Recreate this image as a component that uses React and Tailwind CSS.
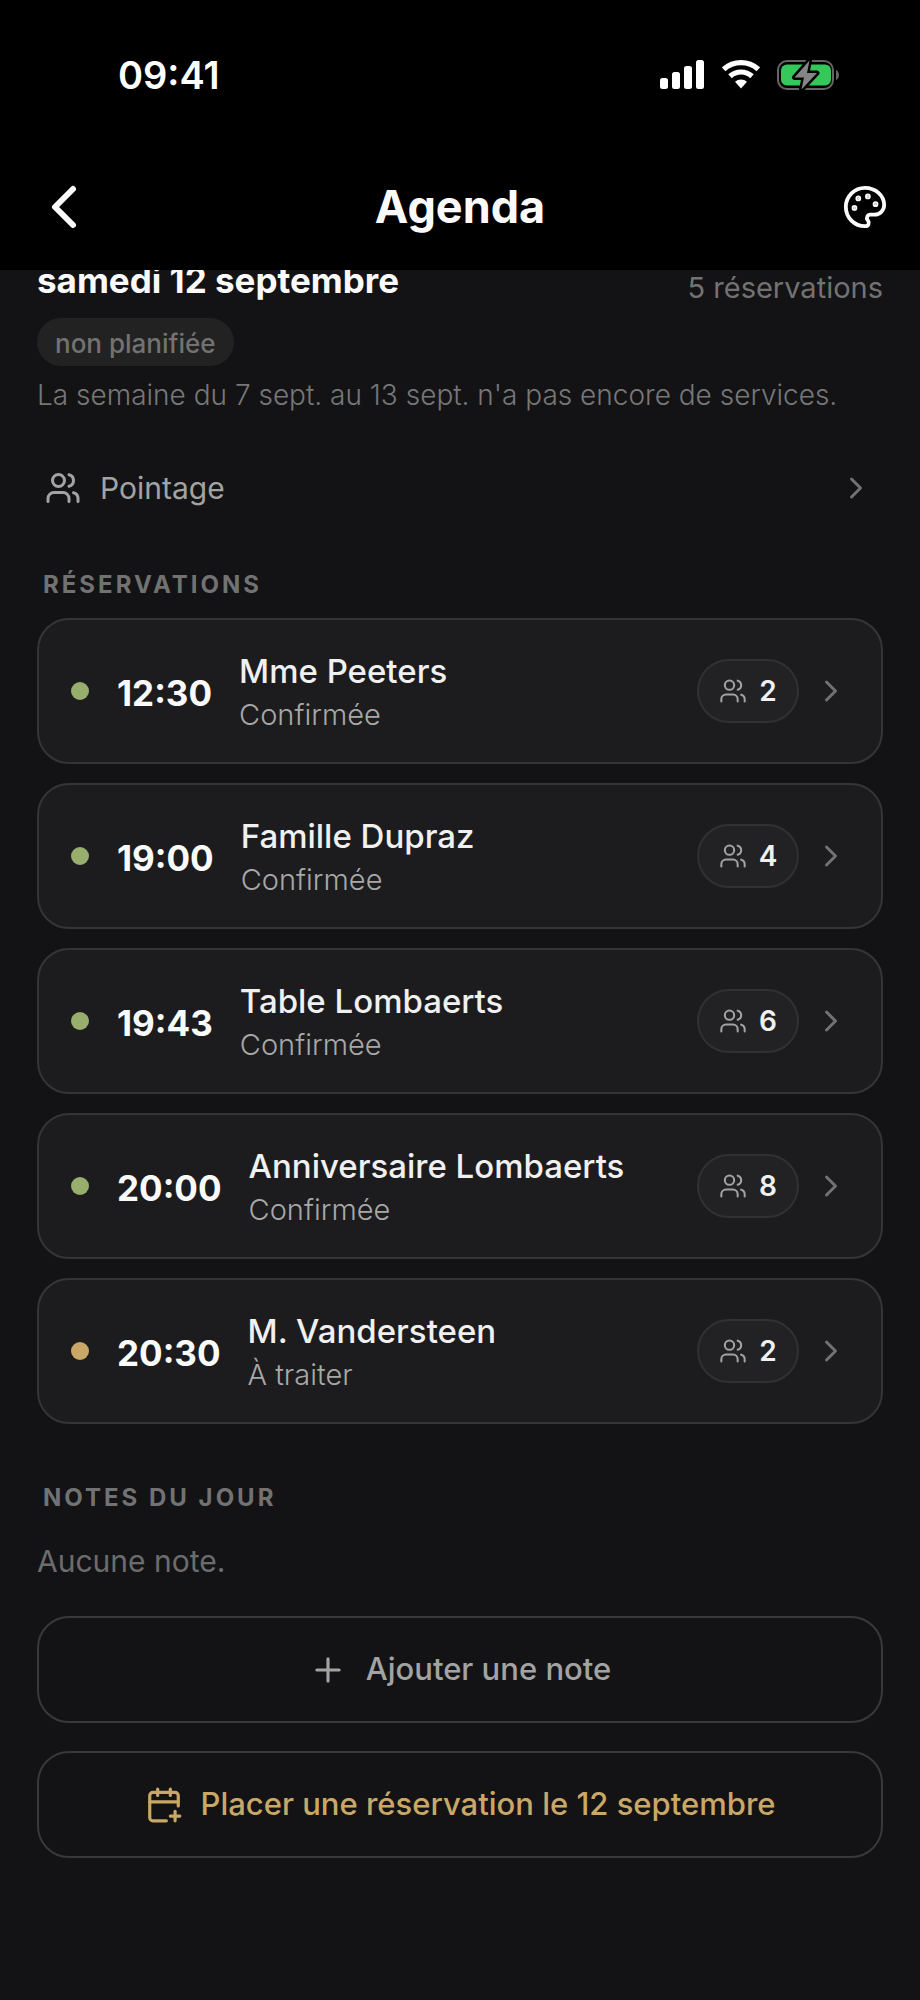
import React from "react";
import { CalendarPlus, ChevronLeft, ChevronRight, Palette, Plus, Users } from "lucide-react";

const reservations = [
  { time: "12:30", name: "Mme Peeters", status: "Confirmée", guests: 2 },
  { time: "19:00", name: "Famille Dupraz", status: "Confirmée", guests: 4 },
  { time: "19:43", name: "Table Lombaerts", status: "Confirmée", guests: 6 },
  { time: "20:00", name: "Anniversaire Lombaerts", status: "Confirmée", guests: 8 },
  { time: "20:30", name: "M. Vandersteen", status: "À traiter", guests: 2 },
];

function StatusBar() {
  return (
    <div className="flex h-[150px] items-center justify-between pr-[80px] pl-[118px] text-white">
      <span className="text-[38px] font-semibold">09:41</span>
      <div className="flex items-center gap-[16px]">
        {/* Signal */}
        <svg className="h-[30px] w-[46px]" viewBox="0 0 46 30" fill="currentColor">
          <rect x="0" y="18" width="8" height="11" rx="2.5" />
          <rect x="12" y="12" width="8" height="17" rx="2.5" />
          <rect x="24" y="6" width="8" height="23" rx="2.5" />
          <rect x="36" y="0" width="8" height="29" rx="2.5" />
        </svg>
        {/* Wifi */}
        <svg className="h-[30px] w-[38px]" viewBox="0 0 38 30" fill="none" stroke="currentColor" strokeWidth="5.2">
          <path d="M1.700 9.300A25.900 25.900 0 0 1 36.300 9.300" />
          <path d="M8 16.200A16.500 16.500 0 0 1 30 16.200" />
          <path d="M19 28.500 13 21.800A9 9 0 0 1 25 21.800z" fill="currentColor" stroke="none" />
        </svg>
        {/* Battery, charging */}
        <svg className="h-[32px] w-[64px]" viewBox="0 0 64 32">
          <rect x="2" y="2" width="55" height="28" rx="9" fill="none" stroke="#656565" strokeWidth="2" />
          <rect x="5" y="5.5" width="50" height="21" rx="6" fill="#34c759" />
          <path d="M60 11c4 1.500 4 8.500 0 10z" fill="#656565" />
          <path
            d="M33.500 1.500 18.500 18.500H28L25.500 30.500 41 14H31z"
            fill="#858585"
            stroke="#000"
            strokeWidth="5"
            strokeLinejoin="round"
            paintOrder="stroke"
          />
        </svg>
      </div>
    </div>
  );
}

function ReservationCard({ time, name, status, guests }) {
  return (
    <button className="flex h-[146px] w-full items-center rounded-[32px] border-2 border-[#353537] bg-[#1c1c1e] pr-[32px] pl-[32px] text-left">
      <span className={`h-[18px] w-[18px] shrink-0 rounded-full ${status === "Confirmée" ? "bg-[#97ae6d]" : "bg-[#c9a867]"}`} />
      <span className="ml-[28px] pt-1 text-[35px] font-bold text-[#fafafa]">{time}</span>
      <span className="ml-[27px] min-w-0 flex-1 pt-[2px]">
        <span className="block truncate text-[33px] leading-[46px] font-medium text-[#f0f0f0]">{name}</span>
        <span className="block text-[29px] leading-[42px] font-light text-[#a8a8a8]">{status}</span>
      </span>
      <span className="flex h-[64px] w-[102px] shrink-0 items-center justify-center gap-[12px] rounded-full border-2 border-[#313133] bg-[#222224]">
        <Users className="h-[28px] w-[28px] text-[#a3a3a3]" strokeWidth={1.75} />
        <span className="text-[28px] font-semibold text-[#f0f0f0]">{guests}</span>
      </span>
      <ChevronRight className="ml-[14px] h-[36px] w-[36px] shrink-0 text-[#727272]" strokeWidth={2} />
    </button>
  );
}

export default function App() {
  return (
    <div className="min-h-screen bg-[#131315] font-[Inter,sans-serif]">
      <header className="bg-black">
        <StatusBar />
        <div className="grid h-[120px] grid-cols-[1fr_auto_1fr] items-center px-[32px] pb-[6px] text-[#fafafa]">
          <button aria-label="Retour" className="-ml-1 justify-self-start">
            <ChevronLeft className="h-[72px] w-[72px]" strokeWidth={2} />
          </button>
          <h1 className="text-[45px] font-bold">Agenda</h1>
          <button aria-label="Thème" className="justify-self-end">
            <Palette className="h-[46px] w-[46px]" strokeWidth={2} />
          </button>
        </div>
      </header>

      <main className="px-[37px]">
        <div className="flex h-[48px] items-end justify-between overflow-hidden pb-[13px]">
          <h2 className="text-[35px] leading-[50px] font-bold text-[#fafafa]">samedi 12 septembre</h2>
          <span className="text-[29px] leading-[35px] text-[#727272]">5 réservations</span>
        </div>
        <span className="inline-flex h-[48px] items-center rounded-full bg-[#222222] px-[18px] pt-[2px] text-[26px] font-medium text-[#727272]">
          non planifiée
        </span>
        <p className="mt-[8px] text-[28px] leading-[42px] font-light text-[#777777]">
          La semaine du 7 sept. au 13 sept. n'a pas encore de services.
        </p>

        <button className="mt-[42px] flex h-[60px] w-full items-center pr-[9px] pl-[8px] text-[#a3a3a3]">
          <Users className="h-[36px] w-[36px]" strokeWidth={2} />
          <span className="ml-[19px] flex-1 text-left text-[30px]">Pointage</span>
          <ChevronRight className="h-[36px] w-[36px] text-[#727272]" strokeWidth={2} />
        </button>

        <h3 className="mt-[49px] px-[6px] text-[24px] leading-[36px] font-bold tracking-[3px] text-[#727272]">RÉSERVATIONS</h3>
        <div className="mt-[15px] flex flex-col gap-[19px]">
          {reservations.map((r) => (
            <ReservationCard key={r.time} {...r} />
          ))}
        </div>

        <h3 className="mt-[56px] px-[6px] text-[24px] leading-[36px] font-bold tracking-[3px] text-[#727272]">NOTES DU JOUR</h3>
        <p className="mt-[24px] text-[30px] leading-[42px] text-[#6c6c6c]">Aucune note.</p>

        <button className="mt-[34px] flex h-[107px] w-full items-center justify-center gap-[19px] rounded-[32px] border-2 border-[#39393b] text-[31px] font-medium text-[#a3a3a3]">
          <Plus className="h-[38px] w-[38px]" strokeWidth={2} />
          Ajouter une note
        </button>
        <button className="mt-[28px] flex h-[107px] w-full items-center justify-center gap-[18px] rounded-[32px] border-2 border-[#39393b] text-[31px] font-medium text-[#c9a867]">
          <CalendarPlus className="h-[38px] w-[38px]" strokeWidth={2} />
          Placer une réservation le 12 septembre
        </button>
      </main>
    </div>
  );
}
